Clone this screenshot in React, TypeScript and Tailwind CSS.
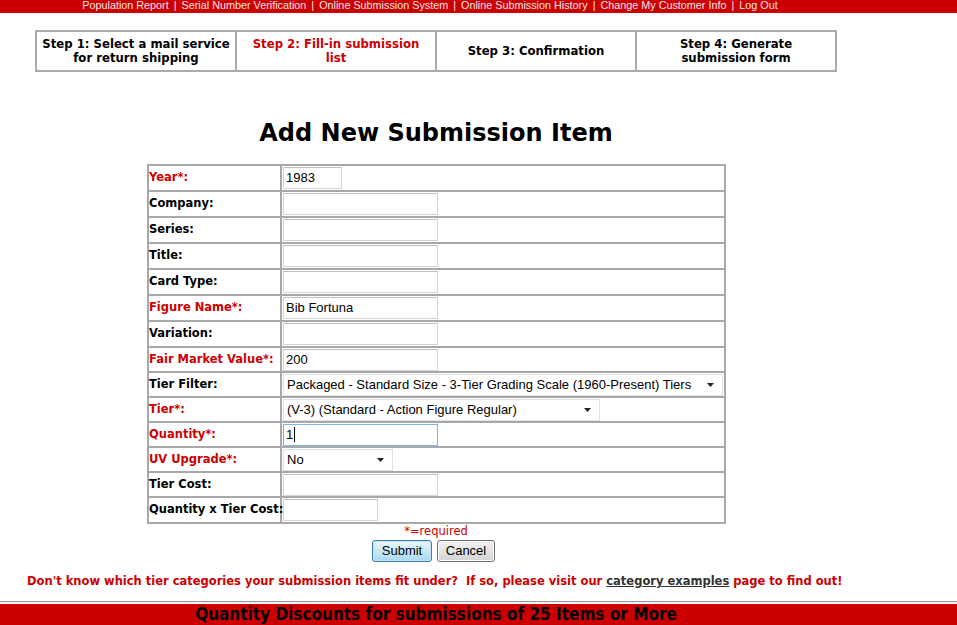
import type { ReactNode } from "react"

const verdana = "font-['DejaVu_Sans',Verdana,sans-serif]"
const arial = "font-['Liberation_Sans',Arial,sans-serif]"

const navLinks = [
  "Population Report",
  "Serial Number Verification",
  "Online Submission System",
  "Online Submission History",
  "Change My Customer Info",
  "Log Out",
]

const steps = [
  { top: "Step 1: Select a mail service", bottom: "for return shipping", active: false },
  { top: "Step 2: Fill-in submission", bottom: "list", active: true },
  { top: "Step 3: Confirmation", bottom: "", active: false },
  { top: "Step 4: Generate", bottom: "submission form", active: false },
]

export default function App() {
  return (
    <div className={`min-h-[625px] bg-white ${verdana}`}>
      {/* top nav */}
      <div className="h-[13px] overflow-hidden bg-[#cc0000]">
        <div className={`w-[860px] text-center text-[10.8px] leading-[11px] text-[#f4e8e8] ${arial}`}>
          {navLinks.map((l, i) => (
            <span key={l}>
              {i > 0 && <span className="px-[5px]">|</span>}
              {l}
            </span>
          ))}
        </div>
      </div>

      <div className="w-[872px]">
        {/* steps */}
        <table className="ml-[35px] mt-[17px] w-[802px] table-fixed border-collapse">
          <tbody>
            <tr className="h-[40px]">
              {steps.map((s) => (
                <td
                  key={s.top}
                  className={`border-2 border-[#ababab] px-0 text-center align-middle text-[11.7px] font-bold leading-[14px] ${
                    s.active ? "text-[#cc0000]" : "text-black"
                  }`}
                >
                  {s.top}
                  {s.bottom && (
                    <>
                      <br />
                      {s.bottom}
                    </>
                  )}
                </td>
              ))}
            </tr>
          </tbody>
        </table>

        <h1 className="mt-[49px] text-center text-[24px] font-bold leading-[24px] text-black">Add New Submission Item</h1>

        {/* form */}
        <table className="ml-[147px] mt-[19px] w-[579px] table-fixed border-collapse border-2 border-[#a8a8a8]">
          <colgroup>
            <col className="w-[133px]" />
            <col />
          </colgroup>
          <tbody>
            <Row label="Year*:" req>
              <TextInput value="1983" w="w-[59px]" />
            </Row>
            <Row label="Company:">
              <TextInput />
            </Row>
            <Row label="Series:">
              <TextInput />
            </Row>
            <Row label="Title:">
              <TextInput />
            </Row>
            <Row label="Card Type:">
              <TextInput />
            </Row>
            <Row label="Figure Name*:" req>
              <TextInput value="Bib Fortuna" />
            </Row>
            <Row label="Variation:">
              <TextInput />
            </Row>
            <Row label="Fair Market Value*:" req short>
              <TextInput value="200" />
            </Row>
            <Row label="Tier Filter:" short>
              <Select value="Packaged - Standard Size - 3-Tier Grading Scale (1960-Present) Tiers" w="w-[440px]" />
            </Row>
            <Row label="Tier*:" req short>
              <Select value="(V-3) (Standard - Action Figure Regular)" w="w-[317px]" />
            </Row>
            <Row label="Quantity*:" req short>
              <TextInput value="1" focused />
            </Row>
            <Row label="UV Upgrade*:" req short>
              <Select value="No" w="w-[110px]" />
            </Row>
            <Row label="Tier Cost:" short>
              <TextInput />
            </Row>
            <Row label="Quantity x Tier Cost:">
              <TextInput w="w-[95px]" />
            </Row>
          </tbody>
        </table>

        <div className="mt-[1px] text-center text-[11.5px] leading-[13px] text-[#cc0000]">*=required</div>

        <div className={`mt-[2px] flex justify-center gap-[5px] pr-[5px] ${arial}`}>
          <button className="h-[22px] w-[60px] rounded-[3px] border border-[#3c7fb1] bg-gradient-to-b from-[#eaf6fd] to-[#a7d9f5] text-[13px] text-black shadow-[inset_0_0_0_1px_#c4e5f6]">
            Submit
          </button>
          <button className="h-[22px] w-[58px] rounded-[3px] border border-[#707070] bg-gradient-to-b from-[#f2f2f2] to-[#d4d4d4] text-[13px] text-black shadow-[inset_0_0_0_1px_#fcfcfc]">
            Cancel
          </button>
        </div>

        <p className="mt-[12px] pl-[27px] text-[11.5px] font-bold leading-[14px] text-[#cc0000]">
          Don't know which tier categories your submission items fit under?&nbsp; If so, please visit our{" "}
          <a className="text-[#333333] underline">category examples</a> page to find out!
        </p>
      </div>

      <div className="mt-[13px] h-[2px] border-t border-[#9a9a9a] bg-[#ededed]" />
      <div className="mt-[1px] h-[22px] bg-[#cc0000]">
        <div className="w-[872px] pt-[1px] text-center font-['DejaVu_Sans_Condensed',Tahoma,sans-serif] text-[17px] font-bold leading-[19px] text-black">
          Quantity Discounts for submissions of 25 Items or More
        </div>
      </div>
    </div>
  )
}

function Row({ label, req, short, children }: { label: string; req?: boolean; short?: boolean; children: ReactNode }) {
  return (
    <tr className={short ? "h-[25px]" : "h-[26px]"}>
      <td
        className={`whitespace-nowrap border-2 border-[#a8a8a8] p-0 text-[11.5px] font-bold ${
          req ? "text-[#cc0000]" : "text-black"
        }`}
      >
        {label}
      </td>
      <td className="border-2 border-[#a8a8a8] p-0 pl-[1px]">{children}</td>
    </tr>
  )
}

function TextInput({ value, w = "w-[155px]", focused }: { value?: string; w?: string; focused?: boolean }) {
  return (
    <div
      className={`flex h-[22px] ${w} items-center border px-[2px] text-[13px] text-black ${arial} ${
        focused ? "border-[#7eb4ea]" : "border-[#d5d5d5] border-t-[#c0c0c0]"
      }`}
    >
      {value}
      {focused && <span className="ml-[1px] h-[15px] w-px bg-black" />}
    </div>
  )
}

function Select({ value, w }: { value: string; w: string }) {
  return (
    <div className={`flex h-[22px] ${w} items-center justify-between border border-[#e0e0e0] pl-[3px] pr-[8px] text-[13px] text-black ${arial}`}>
      <span className="whitespace-nowrap">{value}</span>
      <svg width="7" height="4" viewBox="0 0 7 4">
        <path d="M0 0h7L3.5 4z" fill="#222" />
      </svg>
    </div>
  )
}
